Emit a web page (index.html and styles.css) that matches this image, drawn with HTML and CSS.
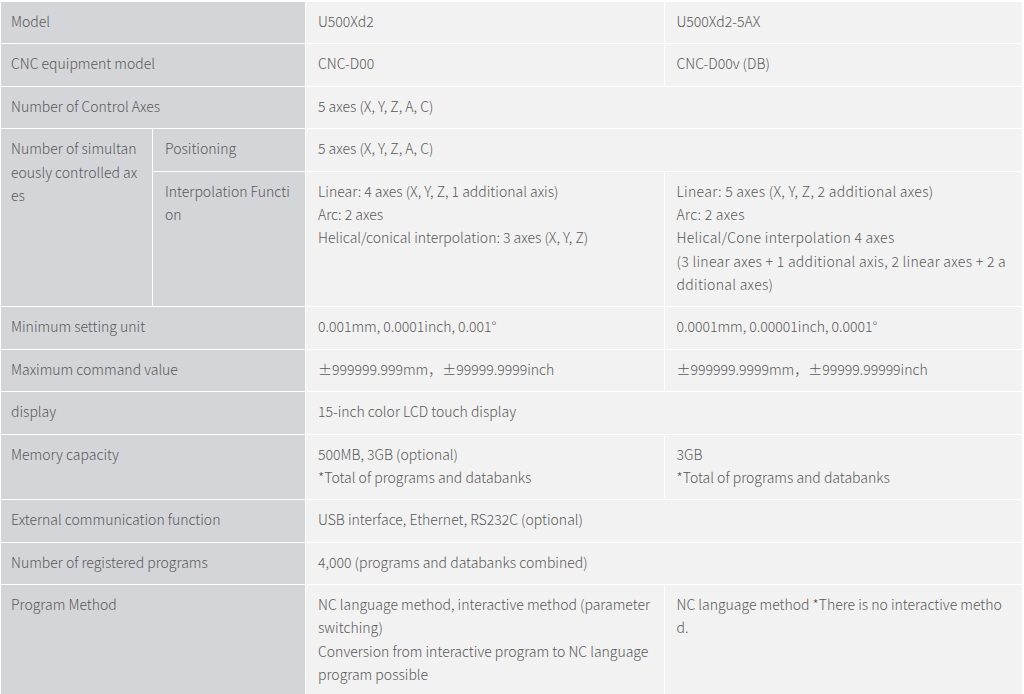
FILE: index.html
```html
<!DOCTYPE html>
<html lang="en">
<head>
  <meta charset="UTF-8">
  <meta name="viewport" content="width=device-width, initial-scale=1.0">
  <title>Specifications</title>
  <link rel="stylesheet" href="styles.css">
</head>
<body>
  <table class="spec">
    <colgroup>
      <col class="c-label">
      <col class="c-sub">
      <col class="c-val">
      <col class="c-val">
    </colgroup>
    <tbody>
      <tr>
        <th colspan="2" class="first">Model</th>
        <td>U500Xd2</td>
        <td>U500Xd2-5AX</td>
      </tr>
      <tr>
        <th colspan="2" class="first">CNC equipment model</th>
        <td>CNC-D00</td>
        <td>CNC-D00v (DB)</td>
      </tr>
      <tr>
        <th colspan="2" class="first">Number of Control Axes</th>
        <td colspan="2">5 axes (X, Y, Z, A, C)</td>
      </tr>
      <tr>
        <th rowspan="2" class="first">Number of simultaneously controlled axes</th>
        <th>Positioning</th>
        <td colspan="2">5 axes (X, Y, Z, A, C)</td>
      </tr>
      <tr>
        <th>Interpolation Function</th>
        <td>Linear: 4 axes (X, Y, Z, 1 additional axis)<br>Arc: 2 axes<br>Helical/conical interpolation: 3 axes (X, Y, Z)</td>
        <td class="wide">Linear: 5 axes (X, Y, Z, 2 additional axes)<br>Arc: 2 axes<br>Helical/Cone interpolation 4 axes<br>(3 linear axes + 1 additional axis, 2 linear axes + 2 additional axes)</td>
      </tr>
      <tr>
        <th colspan="2" class="first">Minimum setting unit</th>
        <td>0.001mm, 0.0001inch, 0.001°</td>
        <td>0.0001mm, 0.00001inch, 0.0001°</td>
      </tr>
      <tr>
        <th colspan="2" class="first">Maximum command value</th>
        <td>±999999.999mm，±99999.9999inch</td>
        <td>±999999.9999mm，±99999.99999inch</td>
      </tr>
      <tr>
        <th colspan="2" class="first">display</th>
        <td colspan="2">15-inch color LCD touch display</td>
      </tr>
      <tr>
        <th colspan="2" class="first">Memory capacity</th>
        <td>500MB, 3GB (optional)<br>*Total of programs and databanks</td>
        <td>3GB<br>*Total of programs and databanks</td>
      </tr>
      <tr>
        <th colspan="2" class="first">External communication function</th>
        <td colspan="2">USB interface, Ethernet, RS232C (optional)</td>
      </tr>
      <tr>
        <th colspan="2" class="first">Number of registered programs</th>
        <td colspan="2">4,000 (programs and databanks combined)</td>
      </tr>
      <tr>
        <th colspan="2" class="first">Program Method</th>
        <td>NC language method, interactive method (parameter switching)<br>Conversion from interactive program to NC language program possible</td>
        <td>NC language method *There is no interactive method.</td>
      </tr>
    </tbody>
  </table>
</body>
</html>
```

FILE: styles.css
```css
:root {
  --head-bg: #d4d5d9;
  --cell-bg: #f2f2f2;
  --line: #fff;
  --text: #595959;
}
* { box-sizing: border-box; }
body { margin: 0; padding-top: 1px; background: #fff; color: var(--text); font-family: 'Noto Sans CJK JP', 'Noto Sans', sans-serif; font-size: 14px; font-weight: 300; }
.spec { width: 1022px; border-collapse: collapse; table-layout: fixed; }
.c-label { width: 152px; }
.c-sub { width: 153px; }
.c-val { width: 358.5px; }
.spec th, .spec td { padding: 8px 12px 10px; border: 1px solid var(--line); text-align: left; vertical-align: top; line-height: 1.67; font-weight: 300; word-break: break-all; }
.spec th { background: var(--head-bg); }
.spec th.first { padding-left: 10px; }
.spec td { background: var(--cell-bg); }
.spec td.wide { letter-spacing: 0.3px; }
```
